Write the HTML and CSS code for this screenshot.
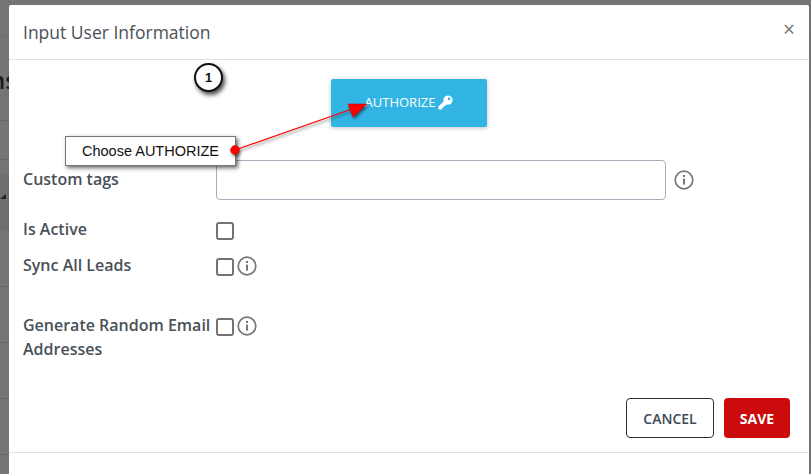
FILE: index.html
```html
<!DOCTYPE html>
<html lang="en">
<head>
<meta charset="utf-8">
<title>Input User Information</title>
<link rel="stylesheet" href="styles.css">
</head>
<body>
<div class="backdrop">
  <span class="bg-text">ns</span>
  <span class="bg-caret"></span>
  <div class="modal">
    <header class="modal-header">
      <h1 class="modal-title">Input User Information</h1>
      <span class="close">×</span>
    </header>
    <main class="modal-body">
      <div class="auth-row">
        <button class="auth-btn">AUTHORIZE
          <svg class="key" viewBox="0 0 16 16"><path fill="currentColor" d="M10.6 0.4a5 5 0 0 1 0 10c-.5 0-1-.1-1.5-.2L7.6 11.8H6v1.7H4.3v2H.4v-3.2l5.5-5.5a5 5 0 0 1 4.7-6.4zm1.3 2.2a1.5 1.5 0 1 0 0 3 1.5 1.5 0 0 0 0-3z"/></svg>
        </button>
      </div>
      <div class="row row-tags">
        <label class="lbl">Custom tags</label>
        <input class="text-input" type="text">
        <svg class="info info-lg" viewBox="0 0 20 20"><circle cx="10" cy="10" r="8.8"/><rect x="9" y="8.6" width="2" height="6"/><rect x="9" y="5" width="2" height="2"/></svg>
      </div>
      <div class="row row-active">
        <label class="lbl">Is Active</label>
        <span class="check"></span>
      </div>
      <div class="row row-sync">
        <label class="lbl">Sync All Leads</label>
        <span class="check"></span>
        <svg class="info" viewBox="0 0 20 20"><circle cx="10" cy="10" r="8.8"/><rect x="9" y="8.6" width="2" height="6"/><rect x="9" y="5" width="2" height="2"/></svg>
      </div>
      <div class="row row-random">
        <label class="lbl">Generate Random Email Addresses</label>
        <span class="check"></span>
        <svg class="info" viewBox="0 0 20 20"><circle cx="10" cy="10" r="8.8"/><rect x="9" y="8.6" width="2" height="6"/><rect x="9" y="5" width="2" height="2"/></svg>
      </div>
      <div class="actions">
        <button class="btn btn-cancel">CANCEL</button>
        <button class="btn btn-save">SAVE</button>
      </div>
    </main>
    <footer class="modal-footer"></footer>
  </div>
  <div class="step-badge">1</div>
  <div class="callout">Choose AUTHORIZE</div>
  <svg class="arrow" viewBox="0 0 811 474">
    <defs><filter id="sh" x="-50%" y="-50%" width="200%" height="200%"><feDropShadow dx="1" dy="2" stdDeviation="1.5" flood-color="#000" flood-opacity=".55"/></filter></defs>
    <g filter="url(#sh)">
      <line x1="235" y1="150" x2="352" y2="109" stroke="#f00" stroke-width="1.2"/>
      <polygon points="367,104 348,104 353,117" fill="#f00" stroke="#a00" stroke-width=".5"/>
      <circle cx="235" cy="150" r="4.4" fill="#f00" stroke="#b00" stroke-width=".5"/>
    </g>
  </svg>
</div>
</body>
</html>
```
FILE: styles.css
```css
* { box-sizing: border-box; }
html, body { margin: 0; padding: 0; }
body { width: 811px; height: 474px; overflow: hidden; font-family: "Open Sans", sans-serif; }
.backdrop {
  position: relative; width: 811px; height: 474px; overflow: hidden; padding: 5px 2px 0 9px;
  background-color: #757575;
  background-image:
    linear-gradient(#666, #666), linear-gradient(#666, #666), linear-gradient(#666, #666),
    linear-gradient(#666, #666), linear-gradient(#666, #666), linear-gradient(#666, #666),
    linear-gradient(#6e6e6e, #6e6e6e), linear-gradient(#6e6e6e, #6e6e6e);
  background-size: 100% 1px, 100% 1px, 100% 1px, 100% 1px, 100% 1px, 100% 1px, 100% 1px, 100% 56px;
  background-position: 0 120px, 0 159px, 0 286px, 0 342px, 0 398px, 0 454px, 0 36px, 0 174px;
  background-repeat: no-repeat;
}
.bg-text { position: absolute; left: -10px; top: 63px; font: 600 24px "Open Sans", sans-serif; color: #1a1a1a; }
.bg-caret { position: absolute; left: 0; top: 194px; width: 0; height: 0; border-left: 6px solid transparent; border-right: 0 solid transparent; border-bottom: 5px solid #222; }
.modal { position: relative; width: 800px; height: 469px; background: #fff; display: flex; flex-direction: column; border-radius: 2px 2px 0 0; }
.modal-header { height: 55px; flex: none; display: flex; align-items: center; justify-content: space-between; padding: 0 14px; border-bottom: 1px solid #dee2e6; }
.modal-title { margin: 0; font-size: 17.5px; font-weight: 400; color: #495057; line-height: 24px; }
.close { font-size: 21px; font-weight: 400; color: #777; line-height: 20px; margin-top: -6px; }
.modal-body { flex: 1; display: flex; flex-direction: column; padding: 0 14px; min-height: 0; }
.auth-row { height: 100px; padding: 19px 0 0 308px; flex: none; }
.auth-btn { width: 156px; height: 48px; border: 0; border-radius: 2px; background: #32b5e5; color: #fff; font: 500 13px "Open Sans", sans-serif; display: flex; align-items: center; justify-content: center; gap: 3px; padding: 0 0 2px 0; box-shadow: 0 1px 4px rgba(0,0,0,.25); }
.key { width: 15px; height: 15px; }
.row { display: flex; align-items: flex-start; flex: none; }
.lbl { width: 193px; flex: none; font-size: 16px; font-weight: 600; color: #495057; line-height: 24px; }
.row-tags { height: 55px; }
.row-tags .lbl { padding-top: 7px; }
.text-input { width: 450px; height: 40px; border: 1px solid #a6b0bb; border-radius: 4px; background: #fff; padding: 0; margin: 0; }
.info { width: 20px; height: 20px; fill: #777; margin: 3px 0 0 3px; flex: none; }
.info circle { fill: none; stroke: #777; stroke-width: 1.7; }
.info-lg { margin: 10px 0 0 8px; }
.row-active { height: 38px; padding-top: 2px; }
.row-sync { height: 60px; }
.row-random { height: 56px; }
.check { width: 18px; height: 18px; flex: none; margin-top: 5px; border: 2px solid #737373; border-radius: 3px; background: #fff; }
.actions { display: flex; justify-content: flex-end; gap: 10px; margin-top: 29px; padding-right: 5px; }
.btn { height: 40px; border-radius: 4px; font: 600 14px "Open Sans", sans-serif; padding: 0; }
.btn-cancel { width: 88px; background: #fff; border: 1px solid #2f2f2f; color: #3b4a5a; }
.btn-save { width: 66px; background: #cc0c0c; border: 0; color: #fff; font-weight: 700; }
.modal-footer { height: 22px; flex: none; border-top: 1px solid #dee2e6; }
.step-badge { position: absolute; left: 194px; top: 63px; width: 29px; height: 29px; border-radius: 50%; border: 2px solid #111; background: #fff; box-shadow: 2px 3px 4px rgba(0,0,0,.7); font: 700 13px/25px "Liberation Sans", sans-serif; text-align: center; color: #111; }
.callout { position: absolute; left: 65px; top: 136px; width: 171px; height: 30px; background: #fff; border: 1px solid #777; box-shadow: 2px 2px 4px rgba(0,0,0,.6); font: 14.5px/28px "Liberation Sans", sans-serif; color: #111; padding-left: 16px; }
.arrow { position: absolute; left: 0; top: 0; width: 811px; height: 474px; pointer-events: none; }
```
